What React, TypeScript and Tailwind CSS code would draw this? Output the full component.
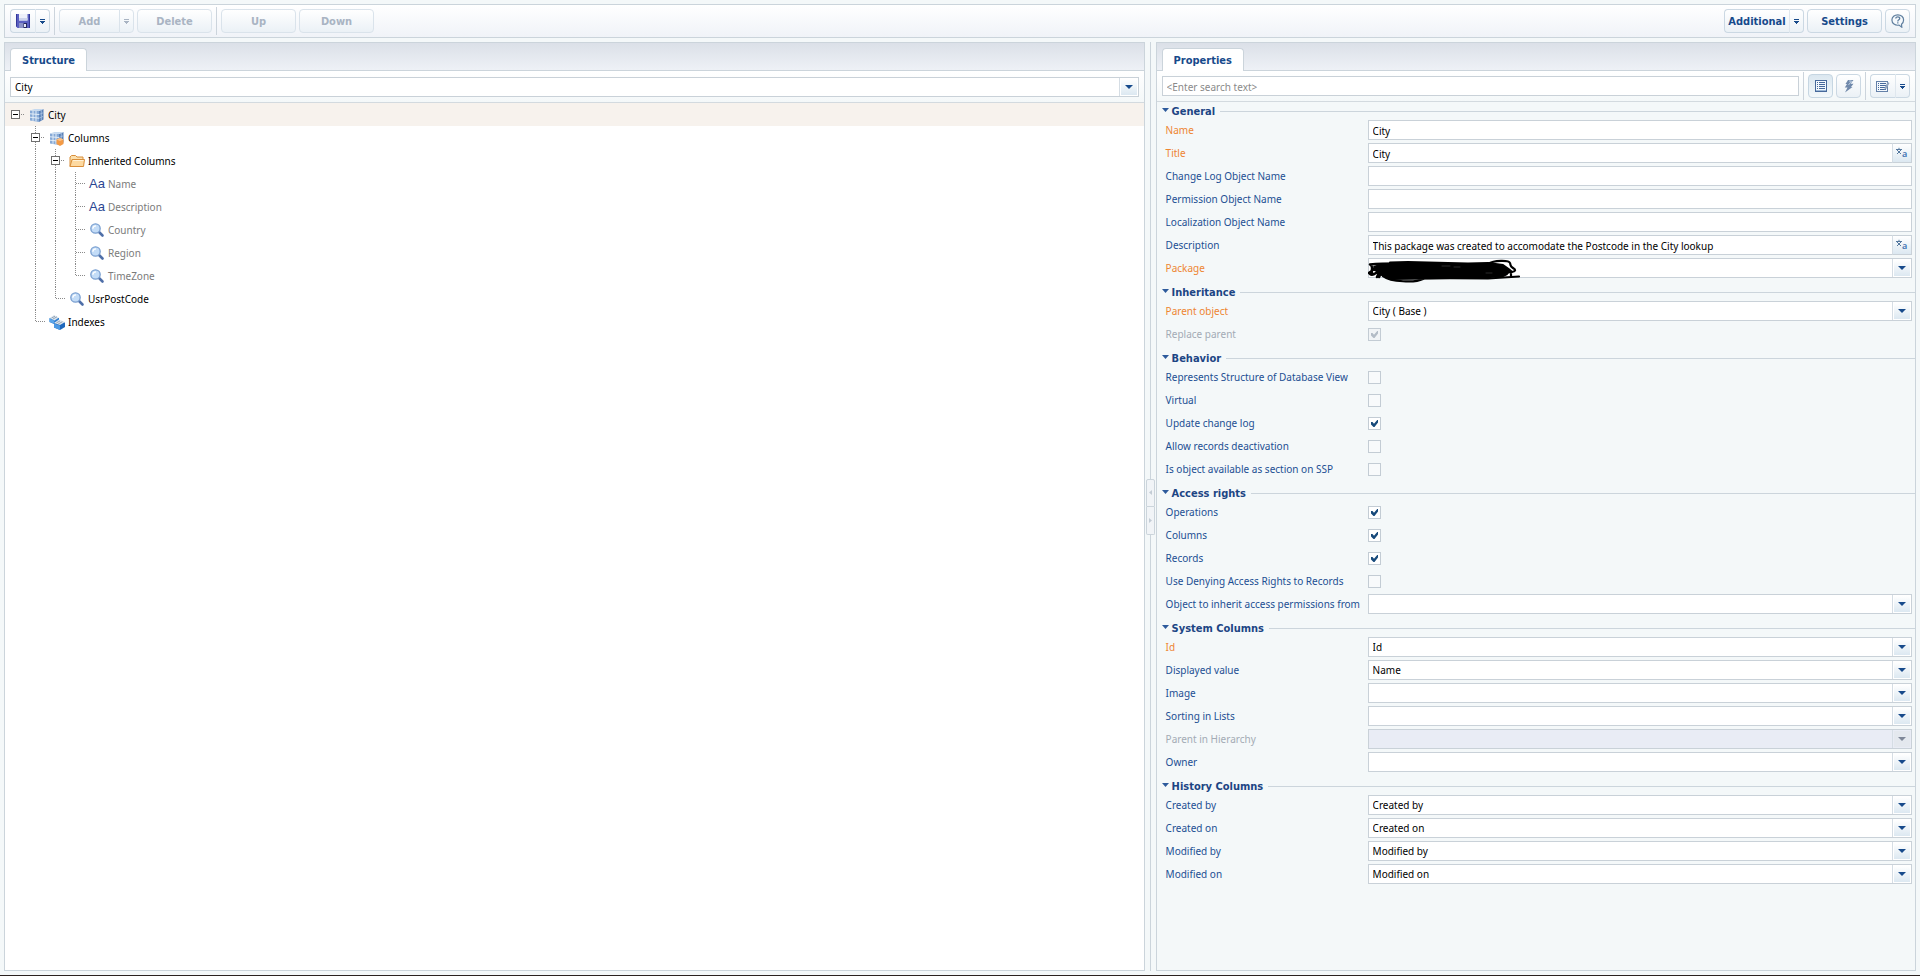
import { useId, useState, type ReactNode } from 'react'
import clsx from 'clsx'

type Tone = 'normal' | 'required' | 'disabled'

type Field = {
  label: string
  kind: 'text' | 'localized' | 'select' | 'check'
  value?: string
  checked?: boolean
  tone?: Tone
  redacted?: boolean
}

type Group = { title: string; fields: Field[] }

const GROUPS: Group[] = [
  {
    title: 'General',
    fields: [
      { label: 'Name', kind: 'text', value: 'City', tone: 'required' },
      { label: 'Title', kind: 'localized', value: 'City', tone: 'required' },
      { label: 'Change Log Object Name', kind: 'text' },
      { label: 'Permission Object Name', kind: 'text' },
      { label: 'Localization Object Name', kind: 'text' },
      {
        label: 'Description',
        kind: 'localized',
        value: 'This package was created to accomodate the Postcode in the City lookup',
      },
      { label: 'Package', kind: 'select', tone: 'required', redacted: true },
    ],
  },
  {
    title: 'Inheritance',
    fields: [
      { label: 'Parent object', kind: 'select', value: 'City ( Base )', tone: 'required' },
      { label: 'Replace parent', kind: 'check', checked: true, tone: 'disabled' },
    ],
  },
  {
    title: 'Behavior',
    fields: [
      { label: 'Represents Structure of Database View', kind: 'check' },
      { label: 'Virtual', kind: 'check' },
      { label: 'Update change log', kind: 'check', checked: true },
      { label: 'Allow records deactivation', kind: 'check' },
      { label: 'Is object available as section on SSP', kind: 'check' },
    ],
  },
  {
    title: 'Access rights',
    fields: [
      { label: 'Operations', kind: 'check', checked: true },
      { label: 'Columns', kind: 'check', checked: true },
      { label: 'Records', kind: 'check', checked: true },
      { label: 'Use Denying Access Rights to Records', kind: 'check' },
      { label: 'Object to inherit access permissions from', kind: 'select' },
    ],
  },
  {
    title: 'System Columns',
    fields: [
      { label: 'Id', kind: 'select', value: 'Id', tone: 'required' },
      { label: 'Displayed value', kind: 'select', value: 'Name' },
      { label: 'Image', kind: 'select' },
      { label: 'Sorting in Lists', kind: 'select' },
      { label: 'Parent in Hierarchy', kind: 'select', tone: 'disabled' },
      { label: 'Owner', kind: 'select' },
    ],
  },
  {
    title: 'History Columns',
    fields: [
      { label: 'Created by', kind: 'select', value: 'Created by' },
      { label: 'Created on', kind: 'select', value: 'Created on' },
      { label: 'Modified by', kind: 'select', value: 'Modified by' },
      { label: 'Modified on', kind: 'select', value: 'Modified on' },
    ],
  },
]

type Line = 'blank' | 'line' | 'tee' | 'end' | 'minus-root' | 'minus'
type Icon = 'table' | 'columns' | 'folder' | 'text' | 'lookup' | 'indexes'

type Node = { label: string; icon: Icon; lines: Line[]; muted?: boolean; selected?: boolean }

const TREE: Node[] = [
  { label: 'City', icon: 'table', lines: ['minus-root'], selected: true },
  { label: 'Columns', icon: 'columns', lines: ['blank', 'minus'] },
  { label: 'Inherited Columns', icon: 'folder', lines: ['blank', 'line', 'minus'] },
  { label: 'Name', icon: 'text', lines: ['blank', 'line', 'line', 'tee'], muted: true },
  { label: 'Description', icon: 'text', lines: ['blank', 'line', 'line', 'tee'], muted: true },
  { label: 'Country', icon: 'lookup', lines: ['blank', 'line', 'line', 'tee'], muted: true },
  { label: 'Region', icon: 'lookup', lines: ['blank', 'line', 'line', 'tee'], muted: true },
  { label: 'TimeZone', icon: 'lookup', lines: ['blank', 'line', 'line', 'end'], muted: true },
  { label: 'UsrPostCode', icon: 'lookup', lines: ['blank', 'line', 'end'] },
  { label: 'Indexes', icon: 'indexes', lines: ['blank', 'end'] },
]

const BOLD = "font-['DejaVu_Sans_Condensed','DejaVu_Sans',sans-serif] text-[11px] font-bold"
const BUTTON =
  'flex h-6 items-center justify-center rounded-[4px] border border-[#cbd8e3] bg-linear-to-b from-white to-[#ebf1f6] text-[#174a8b] disabled:border-[#dae3eb] disabled:text-[#a9b4c3]'

/* ---------- glyphs ---------- */

function MenuArrow() {
  return (
    <svg width="5" height="6" viewBox="0 0 5 6" fill="currentColor" shapeRendering="crispEdges">
      <path d="M0 0h5v1H0zM0 2h5v1H0zM1 3h3v1H1zM2 4h1v1H2z" />
    </svg>
  )
}

function DownArrow() {
  return (
    <svg width="8" height="4" viewBox="0 0 8 4" fill="currentColor">
      <path d="M0 0h8L4 4z" />
    </svg>
  )
}

function SaveIcon() {
  return (
    <svg width="14" height="14" viewBox="0 0 14 14">
      <path d="M0 0h14v14H1.500L0 12.500z" fill="#5a60c0" />
      <path d="M0 0h1v12.500l-1-.5zM13 0h1v14h-1z" fill="#34389a" />
      <path d="M3 0h8.500v6.500H3z" fill="#eef1fa" />
      <path d="M3 4h8.500v2.500H3z" fill="#cdd4ec" />
      <path d="M3 9h8v5H3z" fill="#25285e" />
      <path d="M3 9h4.500v5H3z" fill="#8b92c8" />
      <path d="M8 10h2v3H8z" fill="#e6e9f6" />
    </svg>
  )
}

function HelpIcon() {
  return (
    <svg width="14" height="14" viewBox="0 0 14 14" fill="none" stroke="#5f7f9f">
      <path d="M6.800.8c3.300 0 5.800 2.300 5.800 5.200 0 1.800-.8 3.200-2.100 4.200l.3 3-2.800-2.100c-4 .7-7.100-1.800-7.100-5.100C.9 3.100 3.500.8 6.800.8z" fill="#f5f9fc" strokeWidth="1.200" />
      <path d="M4.800 4.500c0-2.200 3.900-2.200 3.900 0 0 1.400-1.900 1.300-1.900 2.900M6.800 8.300v1.200" strokeWidth="1.300" />
    </svg>
  )
}

function ListIcon() {
  return (
    <svg width="12" height="12" viewBox="0 0 12 12" shapeRendering="crispEdges">
      <path d="M0 0h12v12H0z" fill="#47699b" />
      <path d="M1 1h10v10H1z" fill="#f3f8fd" />
      <path d="M2 2h1v1H2zM2 4h1v1H2zM2 6h1v1H2zM2 8h1v1H2zM4 2h6v1H4zM4 4h6v1H4zM4 6h6v1H4zM4 8h6v1H4z" fill="#47699b" />
      <path d="M1 10h10v1H1z" fill="#9db8d6" />
    </svg>
  )
}

function EventIcon() {
  return (
    <svg width="10" height="14" viewBox="0 0 10 14">
      <path d="M4 1h5.500L6.500 4.800h3L7 8h1.500L1 13.500l2.500-5H.8L3 5H1.500z" fill="#7089ab" />
      <path d="M5 2h2.500L4.500 6" fill="none" stroke="#b9cbe0" />
    </svg>
  )
}

function ListEditIcon() {
  return (
    <svg width="14" height="12" viewBox="0 0 14 12">
      <g shapeRendering="crispEdges">
        <path d="M0 1h12v11H0z" fill="#6480a8" />
        <path d="M1 2h10v9H1z" fill="#f3f8fd" />
        <path d="M2 3h1v1H2zM2 5h1v1H2zM2 7h1v1H2zM2 9h1v1H2zM4 3h6v1H4zM4 5h6v1H4zM4 7h6v1H4zM4 9h6v1H4z" fill="#47699b" />
      </g>
      <path d="M11.700 2l1.800 1L10.500 8.500 8.500 10l.2-2.500z" fill="#90a3be" />
    </svg>
  )
}

function TranslateIcon() {
  return (
    <svg width="14" height="14" viewBox="0 0 14 14">
      <path d="M1 3.500h6M4 1.800v1.500M2 4l4 4M6 4 2 8" stroke="#54789f" fill="none" />
      <text x="7" y="11" fontSize="9" fontWeight="600" fontFamily="Noto Sans, sans-serif" fill="#3f74b3">
        a
      </text>
    </svg>
  )
}

function TableShape() {
  return (
    <>
      <path d="M1 3.500 10 4v11L1 13.500z" fill="#86a9d6" />
      <path d="M10 4l4.500-2v10.500L10 15z" fill="#5b82b8" />
      <path d="M1 3.500 5.500 2l9 0L10 4z" fill="#c3d8ef" />
      <path d="M1 6.800l9 .7M1 10.200l9 1M4 3.700v10.200M7 3.900v10.500" stroke="#e2edf8" fill="none" />
      <path d="M10 7.500l4.500-1.800M10 11.200l4.500-2M12.300 3v10.500" stroke="#a9c3e2" strokeWidth=".8" fill="none" />
    </>
  )
}

function NodeIcon({ icon }: { icon: Icon }) {
  if (icon === 'text') {
    return (
      <span className="w-4 font-['Liberation_Sans',sans-serif] text-[13px] leading-4 text-[#2a4592]">Aa</span>
    )
  }
  return (
    <svg width="16" height="16" viewBox="0 0 16 16" className="shrink-0">
      {icon === 'table' && <TableShape />}
      {icon === 'columns' && (
        <>
          <TableShape />
          <path d="M7.500 9.500 11 8l3.500 1.500v4.500L11 16l-3.500-2z" fill="#f39a45" />
          <path d="M7.500 9.500 11 8l3.500 1.500L11 11z" fill="#fbc389" />
        </>
      )}
      {icon === 'folder' && (
        <>
          <path d="M1 13.500V4l1.500-1.500h4L8 4h6v3" fill="#fbe0ae" stroke="#d98e3a" />
          <path d="M1 13.500 3 6.500h12.500l-1 7z" fill="#fdd9a0" stroke="#d98e3a" />
          <path d="M4 7.500h10.500" stroke="#fff1d6" />
        </>
      )}
      {icon === 'lookup' && (
        <>
          <path d="m10 10 3.500 3.500" stroke="#4f6fa8" strokeWidth="2.600" strokeLinecap="round" />
          <circle cx="6.500" cy="6.500" r="4.700" fill="#c3dcf7" stroke="#7a9fd0" strokeWidth="1.300" />
          <path d="M3.800 6.700C4 4.900 5.200 4 7 3.900" stroke="#fff" strokeWidth="1.300" fill="none" />
        </>
      )}
      {icon === 'indexes' && (
        <>
          <path d="M.5 4h9.500v4.500L6 10.500.5 8z" fill="#2f7fd0" />
          <path d="M.5 4 5 1l5 2.500-4.500 3z" fill="#dfe7ef" />
          <path d="M2.500 4 6 2.200M4 5l4-2.200" stroke="#7f93a8" strokeWidth=".8" />
          <path d="M5 9.500 10 7l6 1.500V13l-5 3-6-2.500z" fill="#1f68bd" />
          <path d="m5 9 5-3.500L16 8l-5 3z" fill="#dfe7ef" />
          <path d="M7.300 9 11 6.900M9.200 10l4.200-2.300" stroke="#7f93a8" strokeWidth=".8" />
          <path d="m5 9.500 6 2V16l-6-2.500z" fill="#4c9ae4" />
          <path d="M.5 4.500 5 6.500v3L.5 8z" fill="#5aa5ea" />
        </>
      )}
    </svg>
  )
}

function TreeLine({ line }: { line: Line }) {
  const minus = line === 'minus' || line === 'minus-root'
  return (
    <svg width="20" height="23" viewBox="0 0 20 23" className="shrink-0" fill="none" shapeRendering="crispEdges">
      <g stroke="#8a8a8a" strokeDasharray="1 1">
        {(line === 'line' || line === 'tee' || line === 'minus') && <path d="M10.500 0v23" />}
        {line === 'end' && <path d="M10.500 0v12" />}
        {(line === 'tee' || line === 'end') && <path d="M11 11.500h9" />}
        {minus && <path d="M16 11.500h4" />}
      </g>
      {minus && (
        <>
          <path d="M6.500 7.500h8v8h-8z" fill="#fff" stroke="#6f6f6f" />
          <path d="M8 11.500h5" stroke="#000" />
        </>
      )}
    </svg>
  )
}

/* ---------- toolbar parts ---------- */

function Separator() {
  return <span className="mx-1 h-7 w-px bg-[#ccd4dc]" />
}

function TextButton({ children, disabled }: { children: string; disabled?: boolean }) {
  return (
    <button disabled={disabled} className={clsx(BUTTON, BOLD, 'w-[75px] pt-0.5')}>
      {children}
    </button>
  )
}

function SplitButton({ children, disabled, label, className }: { children: ReactNode; disabled?: boolean; label: string; className?: string }) {
  return (
    <div className={clsx('flex', className)}>
      <button
        disabled={disabled}
        aria-label={label}
        className={clsx(BUTTON, BOLD, 'flex-1 rounded-r-none border-r-0', typeof children === 'string' && 'pt-0.5')}
      >
        {children}
      </button>
      <button disabled={disabled} aria-label={label + ' menu'} className={clsx(BUTTON, 'w-[15px] rounded-l-none border-l-[#dfe7ee] pt-px')}>
        <MenuArrow />
      </button>
    </div>
  )
}

function PanelTab({ children }: { children: string }) {
  return (
    <div className="flex h-7 shrink-0 items-end border-b border-[#cbd4db] bg-linear-to-b from-[#dbe0e8] to-[#eef1f6] px-[5px]">
      <button className={clsx(BOLD, '-mb-px h-[23px] rounded-t-[4px] border border-b-0 border-[#cbd4db] bg-white px-[11px] pt-0.5 text-[#174a8b]')}>
        {children}
      </button>
    </div>
  )
}

/* ---------- form controls ---------- */

const CONTROL = 'h-5 w-full border border-[#c9d1d8] bg-white pt-px pl-1 text-black outline-none'

function Trigger({ disabled }: { disabled?: boolean }) {
  return (
    <span
      className={clsx(
        'pointer-events-none absolute inset-y-0 right-0 my-px mr-px flex w-[19px] items-center border-l border-[#d5dde4] p-px',
        disabled ? 'text-[#7f8798]' : 'text-[#174a8b]',
      )}
    >
      <span
        className={clsx(
          'flex h-full w-full items-center justify-center',
          disabled ? 'bg-[#e4e8ee]' : 'bg-linear-to-b from-white to-[#dce8f1]',
        )}
      >
        <DownArrow />
      </span>
    </span>
  )
}

function Combo({ id, value = '', disabled, label }: { id?: string; value?: string; disabled?: boolean; label?: string }) {
  return (
    <div className="relative flex-1">
      <select id={id} aria-label={label} disabled={disabled} className={clsx(CONTROL, 'block appearance-none disabled:bg-[#e9ecf5]')}>
        <option>{value}</option>
      </select>
      <Trigger disabled={disabled} />
    </div>
  )
}

function Scribble() {
  return (
    <svg width="154" height="25" viewBox="0 0 154 25" className="pointer-events-none absolute top-0 left-0" fill="none" stroke="#000" strokeLinecap="round" strokeLinejoin="round">
      <path d="M12 7 22 6V4.500l18-.5 60 1.500 20-.5 15 2 7 5-3 4-4 2-13 1-60 1.500-40 .5-12-6-4-6z" fill="#000" strokeWidth="2" />
      <path d="M2 6.500c10-1 22-1 30-1M2 6.500c4 2 1 5 2 8M1 15c6-6 14-8 24-8M2 16c4 3 6-3 12-4M9 19c2-5 4-3 2 0M5 11l14 7" strokeWidth="2.500" />
      <path d="M15 18c8 6 32 7 40 3l4-3M50 20l70 .5 31-2" strokeWidth="2.200" />
      <path d="M120 6c6-4 21-4 22-1s0 3 3 5 3 3-1 4l-10 1M143 13v5" strokeWidth="2.200" />
      <path d="M74 8h8M86 9h6M118 15h6" stroke="#555" strokeWidth=".5" />
    </svg>
  )
}

function CheckBox({ id, checked, disabled }: { id: string; checked?: boolean; disabled?: boolean }) {
  return (
    <span className={clsx('relative block size-[13px]', disabled ? 'text-[#b3bcc6]' : 'text-[#174a7b]')}>
      <input
        id={id}
        type="checkbox"
        defaultChecked={checked}
        disabled={disabled}
        className="peer block size-[13px] appearance-none border border-[#c3ccd4] bg-[#f8fafb] checked:bg-white disabled:bg-[#f1f4f6]"
      />
      <svg width="13" height="13" viewBox="0 0 13 13" className="pointer-events-none absolute inset-0 hidden peer-checked:block" fill="currentColor">
        <path d="M3 5h1.500L6 6.800 9.200 3H10v2.500L6.500 10h-1L3 7.500z" />
      </svg>
    </span>
  )
}

function FieldRow({ field }: { field: Field }) {
  const id = useId()
  const { label, kind, value, checked, tone = 'normal', redacted } = field
  const disabled = tone === 'disabled'
  return (
    <div className="flex h-[23px] items-start pr-[3px] pl-[9px]">
      <label
        htmlFor={id}
        className={clsx(
          'w-[202px] shrink-0 leading-5 whitespace-nowrap',
          tone === 'normal' && 'text-[#1c4f93]',
          tone === 'required' && 'text-[#ee8532]',
          disabled && 'text-[#a3abb5]',
        )}
      >
        {label}
      </label>
      {kind === 'check' && (
        <span className="pt-1">
          <CheckBox id={id} checked={checked} disabled={disabled} />
        </span>
      )}
      {kind === 'text' && <input id={id} defaultValue={value} className={CONTROL} />}
      {kind === 'localized' && (
        <div className="flex h-5 flex-1">
          <input id={id} defaultValue={value} className={clsx(CONTROL, 'border-r-0')} />
          <button aria-label={'Translate ' + label} className="flex w-5 shrink-0 items-center justify-center border border-[#c9d1d8] border-l-[#d5dde4] bg-linear-to-b from-white to-[#dce8f1]">
            <TranslateIcon />
          </button>
        </div>
      )}
      {kind === 'select' && (
        <div className="relative flex flex-1">
          <Combo id={id} value={value} disabled={disabled} />
          {redacted && <Scribble />}
        </div>
      )}
    </div>
  )
}

function FieldGroup({ group }: { group: Group }) {
  const [open, setOpen] = useState(true)
  return (
    <section className="mb-0.5">
      <div className="flex h-[18px] items-center gap-[5px] pl-[5px]">
        <button onClick={() => setOpen((v) => !v)} className={clsx(BOLD, 'flex items-center gap-[3px] leading-[18px] text-[#1c4584]')}>
          <svg width="7" height="4" viewBox="0 0 7 4" fill="#2d5a9c" className="mb-0.5">
            <path d="M0 0h7L3.500 4z" />
          </svg>
          <span className="pt-px">{group.title}</span>
        </button>
        <span className="h-px flex-1 bg-[#ccd5dc]" />
      </div>
      {open && group.fields.map((f) => <FieldRow key={f.label} field={f} />)}
    </section>
  )
}

/* ---------- page ---------- */

function Toolbar() {
  return (
    <header className="flex h-[34px] shrink-0 items-center border border-[#cbd4db] bg-linear-to-b from-white to-[#f0f3f8] px-[5px]">
      <SplitButton label="Save" className="w-10">
        <SaveIcon />
      </SplitButton>
      <Separator />
      <div className="flex gap-[3px]">
        <SplitButton label="Add" disabled className="w-[75px]">
          Add
        </SplitButton>
        <TextButton disabled>Delete</TextButton>
      </div>
      <Separator />
      <div className="flex gap-[3px]">
        <TextButton disabled>Up</TextButton>
        <TextButton disabled>Down</TextButton>
      </div>
      <div className="ml-auto flex gap-[3px]">
        <SplitButton label="Additional" className="w-20">
          Additional
        </SplitButton>
        <TextButton>Settings</TextButton>
        <button aria-label="Help" className={clsx(BUTTON, 'w-[25px]')}>
          <HelpIcon />
        </button>
      </div>
    </header>
  )
}

function StructurePanel() {
  return (
    <section className="flex min-w-0 flex-col border border-[#cbd4db] bg-white">
      <PanelTab>Structure</PanelTab>
      <div className="flex h-8 shrink-0 items-center border-b border-[#d3dadf] bg-linear-to-b from-white to-[#f4f8f9] px-[5px]">
        <Combo label="Object" value="City" />
      </div>
      <ul role="tree">
        {TREE.map((node) => (
          <li
            key={node.label}
            role="treeitem"
            aria-selected={!!node.selected}
            className={clsx('flex h-[23px] items-center', node.selected && 'bg-[#f7f2ed]', node.muted ? 'text-[#7b7b7b]' : 'text-black')}
          >
            {node.lines.map((line, i) => (
              <TreeLine key={i} line={line} />
            ))}
            <span className="mr-[3px] ml-1 flex pt-px">
              <NodeIcon icon={node.icon} />
            </span>
            <span className="pt-px">{node.label}</span>
          </li>
        ))}
      </ul>
    </section>
  )
}

function Splitter() {
  return (
    <div className="flex flex-col items-center">
      <span className="w-px flex-1 bg-[#cbd4db]" />
      <button aria-label="Collapse left" className="flex h-7 w-[9px] items-center justify-center rounded-t-[2px] border border-[#cbd4db] bg-[#f1f4f7]">
        <svg width="3" height="5" viewBox="0 0 3 5" fill="#c3ccd5">
          <path d="M3 0v5L0 2.500z" />
        </svg>
      </button>
      <button aria-label="Collapse right" className="flex h-7 w-[9px] items-center justify-center rounded-b-[2px] border border-t-0 border-[#cbd4db] bg-[#f1f4f7]">
        <svg width="3" height="5" viewBox="0 0 3 5" fill="#c3ccd5">
          <path d="M0 0v5l3-2.500z" />
        </svg>
      </button>
      <span className="w-px flex-1 bg-[#cbd4db]" />
    </div>
  )
}

function PropertiesPanel() {
  return (
    <section className="flex min-w-0 flex-col border border-[#cbd4db]">
      <PanelTab>Properties</PanelTab>
      <div className="flex h-[31px] shrink-0 items-center border-b border-[#d3dadf] bg-linear-to-b from-white to-[#f4f8f9] px-[5px]">
        <input aria-label="Search" placeholder="<Enter search text>" className={clsx(CONTROL, 'flex-1 placeholder:text-[#8a8a8a]')} />
        <Separator />
        <button aria-label="Properties list" className="flex h-6 w-[25px] items-center justify-center rounded-[4px] border border-[#c6d6e2] bg-linear-to-b from-[#dbe7f0] to-[#f3f8fb]">
          <ListIcon />
        </button>
        <button aria-label="Events" className={clsx(BUTTON, 'ml-[3px] w-[25px]')}>
          <EventIcon />
        </button>
        <Separator />
        <SplitButton label="View" className="w-10">
          <ListEditIcon />
        </SplitButton>
      </div>
      {GROUPS.map((g) => (
        <FieldGroup key={g.title} group={g} />
      ))}
    </section>
  )
}

export default function App() {
  return (
    <div className="flex min-h-screen flex-col bg-[#f4f8f9] font-['Noto_Sans',sans-serif] text-[10px]">
      <div className="flex flex-1 flex-col gap-1 p-1">
        <Toolbar />
        <main className="grid flex-1 grid-cols-[3fr_11px_2fr]">
          <StructurePanel />
          <Splitter />
          <PropertiesPanel />
        </main>
      </div>
      <div className="h-px bg-[#2b211f]" />
    </div>
  )
}
